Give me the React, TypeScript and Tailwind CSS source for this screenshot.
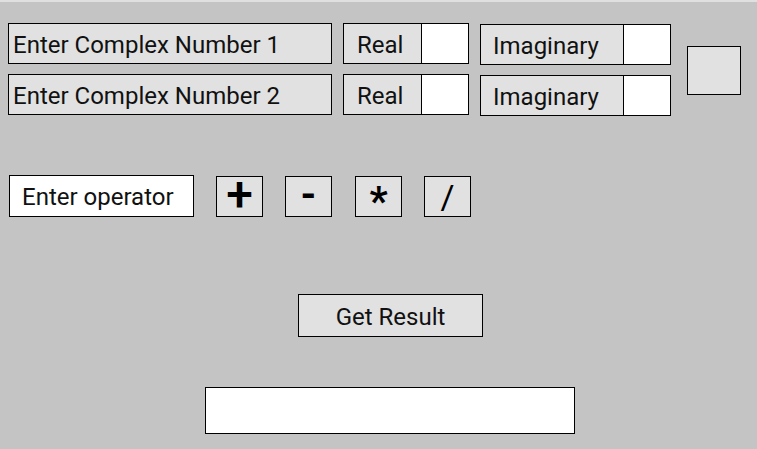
const labelBox =
  "h-[41px] border border-black bg-[#e1e1e1] flex items-center pt-[3px] text-[24px] leading-none text-[#111] whitespace-nowrap";
const whiteBox = "h-[41px] w-[48px] border border-black bg-white";
const opBtn =
  "w-[47px] h-[41px] border border-black bg-[#e1e1e1] flex items-center justify-center leading-none text-black";

const ComplexRow = ({ label, first }: { label: string; first?: boolean }) => (
  <div className={`flex ${first ? "" : "mt-[10px]"}`}>
    <div className={`${labelBox} w-[324px] pl-[4px]`}>{label}</div>
    <div className="flex ml-[11px]">
      <div className={`${labelBox} w-[79px] pl-[13px]`}>Real</div>
      <div className={`${whiteBox} -ml-px`} />
    </div>
    <div className="flex ml-[11px] mt-px -mb-px">
      <div className={`${labelBox} w-[144px] pl-[12px]`}>Imaginary</div>
      <div className={`${whiteBox} -ml-px`} />
    </div>
  </div>
);

export default function App() {
  return (
    <div
      className="w-[757px] h-[449px] bg-[#c4c4c4] border-t-2 border-[#e0e0e0] overflow-hidden"
      style={{ fontFamily: "Roboto, 'Liberation Sans', sans-serif" }}
    >
      <div className="flex pt-[21px] pl-[8px]">
        <div className="flex flex-col">
          <ComplexRow label="Enter Complex Number 1" first />
          <ComplexRow label="Enter Complex Number 2" />
        </div>
        <div className="ml-[16px] mt-[23px] w-[54px] h-[49px] border border-black bg-[#e1e1e1]" />
      </div>

      <div className="flex items-start mt-[60px] pl-[9px]">
        <div className="w-[185px] h-[42px] border border-black bg-white flex items-center pl-[12px] pt-[1px] text-[24px] leading-none text-[#111]">
          Enter operator
        </div>
        <div className="flex gap-[22px] ml-[22px] mt-px">
          <button className={`${opBtn} font-medium text-[48px] pb-[3px]`}>+</button>
          <button className={`${opBtn} font-bold text-[40px] pb-[3px]`}>-</button>
          <button className={`${opBtn} font-bold text-[40px] ml-px pt-[10px]`}>*</button>
          <button className={`${opBtn} text-[34px]`}>/</button>
        </div>
      </div>

      <div className="mt-[77px] pl-[298px]">
        <button className="w-[185px] h-[43px] border border-black bg-[#e1e1e1] flex items-center justify-center pt-[2px] text-[24px] leading-none text-[#111]">
          Get Result
        </button>
      </div>

      <div className="mt-[50px] pl-[205px]">
        <div className="w-[370px] h-[47px] border border-black bg-white" />
      </div>
    </div>
  );
}
